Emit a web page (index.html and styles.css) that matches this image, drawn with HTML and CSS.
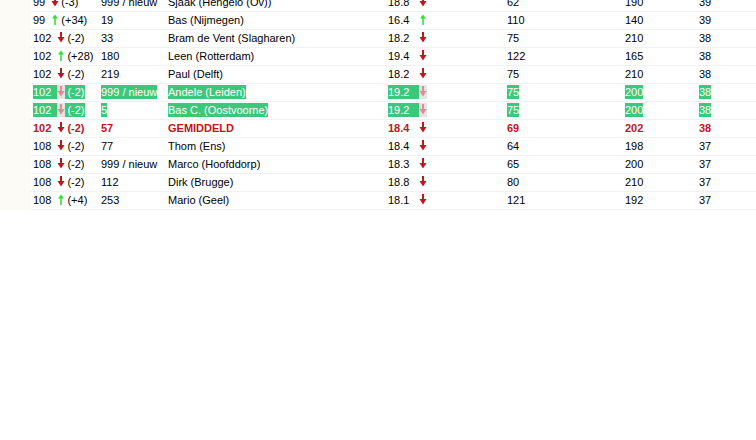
FILE: index.html
```html
<!DOCTYPE html>
<html>
<head>
<meta charset="utf-8">
<link rel="stylesheet" href="styles.css">
</head>
<body>
<svg class="defs" width="0" height="0" aria-hidden="true">
  <symbol id="dn" viewBox="0 0 8 11"><rect x="3" y="0" width="2" height="6"/><polygon points="0.5,5 7.5,5 4,10.5"/></symbol>
  <symbol id="up" viewBox="0 0 8 11"><polygon points="1,4.5 7,4.5 4,0.5"/><rect x="3.25" y="4" width="1.5" height="7"/></symbol>
</svg>
<div class="wrap">
<table class="rank">
<colgroup><col class="c1"><col class="c2"><col class="c3"><col class="c4"><col class="c5"><col class="c6"><col class="c7"></colgroup>
<tbody>
<tr><td>99 <svg class="ar dn"><use href="#dn"/></svg>(-3)</td><td>999 / nieuw</td><td>Sjaak (Hengelo (Ov))</td><td>18.8&nbsp; <svg class="ar dn"><use href="#dn"/></svg></td><td>62</td><td>190</td><td>39</td></tr>
<tr><td>99 <svg class="ar up"><use href="#up"/></svg>(+34)</td><td>19</td><td>Bas (Nijmegen)</td><td>16.4&nbsp; <svg class="ar up"><use href="#up"/></svg></td><td>110</td><td>140</td><td>39</td></tr>
<tr><td>102 <svg class="ar dn"><use href="#dn"/></svg>(-2)</td><td>33</td><td>Bram de Vent (Slagharen)</td><td>18.2&nbsp; <svg class="ar dn"><use href="#dn"/></svg></td><td>75</td><td>210</td><td>38</td></tr>
<tr><td>102 <svg class="ar up"><use href="#up"/></svg>(+28)</td><td>180</td><td>Leen (Rotterdam)</td><td>19.4&nbsp; <svg class="ar dn"><use href="#dn"/></svg></td><td>122</td><td>165</td><td>38</td></tr>
<tr><td>102 <svg class="ar dn"><use href="#dn"/></svg>(-2)</td><td>219</td><td>Paul (Delft)</td><td>18.2&nbsp; <svg class="ar dn"><use href="#dn"/></svg></td><td>75</td><td>210</td><td>38</td></tr>
<tr class="hl"><td><span class="sel pre">102 </span><span class="selimg"><svg class="ar dn"><use href="#dn"/></svg></span><span class="sel post">(-2)</span></td><td><span class="sel">999 / nieuw</span></td><td><span class="sel">Andele (Leiden)</span></td><td><span class="sel pre">19.2&nbsp; </span><span class="selimg"><svg class="ar dn"><use href="#dn"/></svg></span></td><td><span class="sel">75</span></td><td><span class="sel">200</span></td><td><span class="sel">38</span></td></tr>
<tr class="hl"><td><span class="sel pre">102 </span><span class="selimg"><svg class="ar dn"><use href="#dn"/></svg></span><span class="sel post">(-2)</span></td><td><span class="sel">5</span></td><td><span class="sel">Bas C. (Oostvoorne)</span></td><td><span class="sel pre">19.2&nbsp; </span><span class="selimg"><svg class="ar dn"><use href="#dn"/></svg></span></td><td><span class="sel">75</span></td><td><span class="sel">200</span></td><td><span class="sel">38</span></td></tr>
<tr class="avg"><td>102 <svg class="ar dn"><use href="#dn"/></svg>(-2)</td><td>57</td><td>GEMIDDELD</td><td>18.4&nbsp; <svg class="ar dn"><use href="#dn"/></svg></td><td>69</td><td>202</td><td>38</td></tr>
<tr><td>108 <svg class="ar dn"><use href="#dn"/></svg>(-2)</td><td>77</td><td>Thom (Ens)</td><td>18.4&nbsp; <svg class="ar dn"><use href="#dn"/></svg></td><td>64</td><td>198</td><td>37</td></tr>
<tr><td>108 <svg class="ar dn"><use href="#dn"/></svg>(-2)</td><td>999 / nieuw</td><td>Marco (Hoofddorp)</td><td>18.3&nbsp; <svg class="ar dn"><use href="#dn"/></svg></td><td>65</td><td>200</td><td>37</td></tr>
<tr><td>108 <svg class="ar dn"><use href="#dn"/></svg>(-2)</td><td>112</td><td>Dirk (Brugge)</td><td>18.8&nbsp; <svg class="ar dn"><use href="#dn"/></svg></td><td>80</td><td>210</td><td>37</td></tr>
<tr><td>108 <svg class="ar up"><use href="#up"/></svg>(+4)</td><td>253</td><td>Mario (Geel)</td><td>18.1&nbsp; <svg class="ar dn"><use href="#dn"/></svg></td><td>121</td><td>192</td><td>37</td></tr>
</tbody>
</table>
</div>
</body>
</html>
```

FILE: styles.css
```css
html, body {
  margin: 0;
  padding: 0;
  background: #ffffff;
}
body {
  font-family: "Liberation Sans", Arial, sans-serif;
  font-size: 11px;
  color: #000;
  overflow: hidden;
}
.defs {
  display: block;
  width: 0;
  height: 0;
  overflow: hidden;
}
.wrap {
  background: #fcfbf6;
  margin-top: -6px;
  padding-left: 31px;
  overflow: hidden;
}
.rank {
  border-collapse: collapse;
  table-layout: fixed;
  width: 725px;
  background: #fff;
}
.c1 { width: 68px; }
.c2 { width: 67px; }
.c3 { width: 220px; }
.c4 { width: 119px; }
.c5 { width: 118px; }
.c6 { width: 74px; }
.c7 { width: 59px; }
.rank td {
  height: 17px;
  padding: 0 0 0 2px;
  border-bottom: 1px solid #f1f1f1;
  white-space: nowrap;
  vertical-align: middle;
  line-height: 13px;
  overflow: hidden;
}
.ar {
  width: 8px;
  height: 11px;
  margin: 0 2px 0 3px;
  vertical-align: -1px;
}
.dn { fill: #c4121e; }
.up { fill: #2de02d; }
.sel {
  background: #3cc87a;
  color: #fff;
  padding: 1px 0;
}
.sel.pre {
  padding-right: 3px;
}
.sel.post {
  padding-left: 2px;
}
.selimg {
  background: #e4e4e4;
  padding: 1px 0;
}
.selimg .ar {
  fill: #dc8c92;
  margin: 0;
}
.avg td {
  color: #c4121e;
  font-weight: bold;
}
```
